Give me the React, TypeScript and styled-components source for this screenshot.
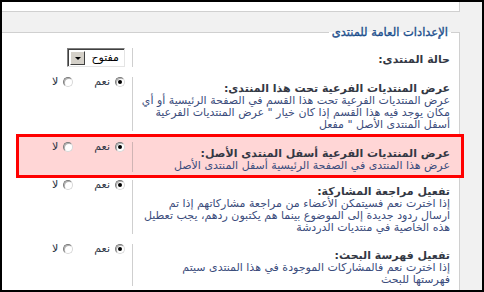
import React from 'react';
import styled, { createGlobalStyle } from 'styled-components';

const Global = createGlobalStyle`
  html, body { margin: 0; padding: 0; background: #fff; }
  body { font-family: "DejaVu Sans", Tahoma, sans-serif; }
`;

const Frame = styled.div`
  width: 484px;
  height: 292px;
  box-sizing: border-box;
  border: 2px solid #000;
  background: #f1f1f1;
  direction: rtl;
  overflow: hidden;
  padding-right: 22px;
  display: flex;
  flex-direction: column;
`;

const TopPanel = styled.div`
  height: 9px;
  background: #fff;
  border-right: 1px solid #d0d0d0;
  border-bottom: 1px solid #d0d0d0;
`;

const Fieldset = styled.fieldset`
  margin: 13px 0 0;
  padding: 0 3px 0 22px;
  border: 0;
  border-top: 1px solid #d0d0d0;
  border-right: 1px solid #d0d0d0;
  background: #fff;
  flex: 1;
  min-width: 0;
  display: flex;
  flex-direction: column;
`;

const Legend = styled.legend`
  margin-right: 5px;
  padding: 0 3px;
  font: 11.5px/14px "DejaVu Sans", Tahoma, sans-serif;
  color: #1d4f8d;
  -webkit-text-stroke: 0.35px #1d4f8d;
`;

const Rows = styled.div`
  display: flex;
  flex-direction: column;
  padding-top: 9px;
`;

const Row = styled.div<{ $highlight?: boolean; $first?: boolean }>`
  display: grid;
  grid-template-columns: 1fr 109px;
  margin-top: ${(p) => (p.$first ? '0' : '10px')};
  ${(p) =>
    p.$highlight &&
    `
    margin: 3px -8px -8px;
    padding: 5px 5px 3px;
    border: 3px solid #ff0000;
    background: #ffd6d6;
  `}
`;

const TextCell = styled.div`
  padding: 5px 6px 0 4px;
  min-width: 0;
`;

const Title = styled.div`
  font-size: 11px;
  line-height: 13px;
  font-weight: bold;
  color: #333844;
  white-space: nowrap;
`;

const Desc = styled.div`
  font-size: 11px;
  line-height: 12px;
  color: #3b4c7c;
  white-space: nowrap;
`;

const ControlCell = styled.div<{ $highlight?: boolean }>`
  box-sizing: border-box;
  border-right: 1px solid ${(p) => (p.$highlight ? '#d0b4b4' : '#cfcfcf')};
  padding-right: 7px;
  display: flex;
  align-items: flex-start;
`;

const Options = styled.div`
  display: flex;
  gap: 21px;
  align-items: center;
`;

const Option = styled.label`
  display: flex;
  align-items: center;
  gap: 5px;
  font-size: 11px;
  line-height: 10px;
  color: #2e3545;
`;

const RadioMark = styled.span<{ $checked?: boolean }>`
  position: relative;
  width: 10px;
  height: 10px;
  box-sizing: border-box;
  border-radius: 50%;
  border: 1px solid;
  border-color: #7a7a7a #d8d8d8 #d8d8d8 #7a7a7a;
  background: #fff;
  box-shadow: inset 1px 1px 0 #b0b0b0;
  &::after {
    content: '';
    display: ${(p) => (p.$checked ? 'block' : 'none')};
    position: absolute;
    left: 2px;
    top: 2px;
    width: 4px;
    height: 4px;
    border-radius: 50%;
    background: #000;
  }
`;

const SelectBox = styled.div`
  width: 58px;
  height: 19px;
  box-sizing: border-box;
  border: 1px solid;
  border-color: #7f7f7f #e4e4e4 #e4e4e4 #7f7f7f;
  box-shadow: inset 1px 1px 0 #404040;
  background: #fff;
  display: flex;
  align-items: stretch;
  padding: 2px 2px 1px 2px;
`;

const SelectValue = styled.span`
  flex: 1;
  font-size: 11px;
  line-height: 14px;
  color: #000;
  padding-right: 3px;
`;

const DropButton = styled.span`
  width: 15px;
  box-sizing: border-box;
  background: #d4d0c8;
  border: 1px solid;
  border-color: #fff #404040 #404040 #fff;
  display: flex;
  align-items: center;
  justify-content: center;
`;

const Arrow = styled.span`
  width: 0;
  height: 0;
  border-left: 3px solid transparent;
  border-right: 3px solid transparent;
  border-top: 3px solid #000;
`;

type Item = {
  title: string;
  desc: string[];
  highlight?: boolean;
};

const items: Item[] = [
  {
    title: 'عرض المنتديات الفرعية تحت هذا المنتدى:',
    desc: [
      'عرض المنتديات الفرعية تحت هذا القسم في الصفحة الرئيسية أو أي',
      'مكان يوجد فيه هذا القسم إذا كان خيار " عرض المنتديات الفرعية',
      'أسفل المنتدى الأصل " مفعل',
    ],
  },
  {
    title: 'عرض المنتديات الفرعية أسفل المنتدى الأصل:',
    desc: ['عرض هذا المنتدى في الصفحة الرئيسية أسفل المنتدى الأصل'],
    highlight: true,
  },
  {
    title: 'تفعيل مراجعة المشاركة:',
    desc: [
      'إذا اخترت نعم فسيتمكن الأعضاء من مراجعة مشاركاتهم إذا تم',
      'ارسال ردود جديدة إلى الموضوع بينما هم يكتبون ردهم، يجب تعطيل',
      'هذه الخاصية في منتديات الدردشة',
    ],
  },
  {
    title: 'تفعيل فهرسة البحث:',
    desc: [
      'إذا اخترت نعم فالمشاركات الموجودة في هذا المنتدى سيتم',
      'فهرستها للبحث',
    ],
  },
];

function YesNo({ hl }: { hl?: boolean }) {
  return (
    <ControlCell $highlight={hl}>
      <Options>
        <Option>
          <RadioMark $checked />
          نعم
        </Option>
        <Option>
          <RadioMark />
          لا
        </Option>
      </Options>
    </ControlCell>
  );
}

export default function App() {
  return (
    <>
      <Global />
      <Frame>
        <TopPanel />
        <Fieldset>
          <Legend>الإعدادات العامة للمنتدى</Legend>
          <Rows>
            <Row $first>
              <TextCell>
                <Title>حالة المنتدى:</Title>
              </TextCell>
              <ControlCell>
                <SelectBox>
                  <SelectValue>مفتوح</SelectValue>
                  <DropButton>
                    <Arrow />
                  </DropButton>
                </SelectBox>
              </ControlCell>
            </Row>
            {items.map((it, i) => (
              <Row key={i} $highlight={it.highlight}>
                <TextCell>
                  <Title>{it.title}</Title>
                  {it.desc.map((d, j) => (
                    <Desc key={j}>{d}</Desc>
                  ))}
                </TextCell>
                <YesNo hl={it.highlight} />
              </Row>
            ))}
          </Rows>
        </Fieldset>
      </Frame>
    </>
  );
}
